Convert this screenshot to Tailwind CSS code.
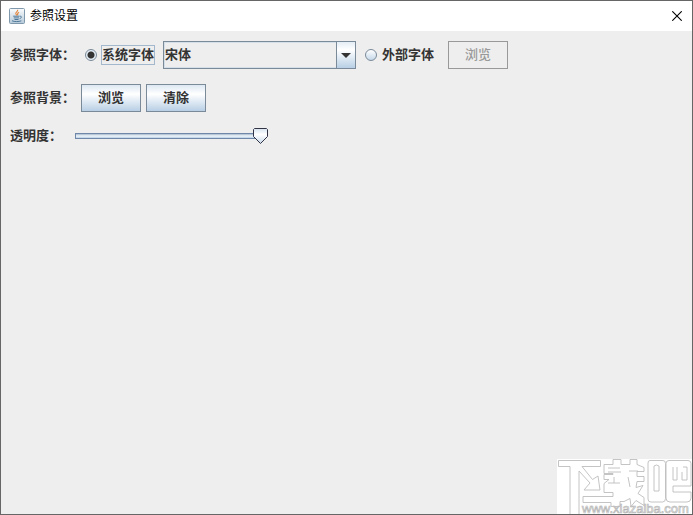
<!DOCTYPE html>
<html lang="zh-CN">
<head>
<meta charset="utf-8">
<meta name="viewport" content="width=device-width, initial-scale=1">
<title>参照设置</title>
<script src="https://cdn.jsdelivr.net/npm/@tailwindcss/browser@4"></script>
</head>
<body class="relative flex min-h-screen flex-col overflow-hidden border border-[#666] bg-[#eeeeee] font-['Liberation_Sans','Noto_Sans_CJK_SC',sans-serif] text-[13px] leading-4 font-bold text-[#333]">
  <header class="flex h-[30px] items-center bg-white px-[7px]">
    <svg class="ml-px h-4 w-4 shrink-0" viewBox="0 0 16 16" fill="none" aria-hidden="true">
      <defs>
        <linearGradient id="tile" x1="0" y1="0" x2="0" y2="1">
          <stop offset="0" stop-color="#fafcfd"/>
          <stop offset="1" stop-color="#b5c9d9"/>
        </linearGradient>
      </defs>
      <rect x=".5" y=".5" width="15" height="15" rx="1" fill="url(#tile)" stroke="#7f98ab"/>
      <path d="M8.600 1.800c.8 1.600-2.400 2.300-1.800 3.900.2.600.8 1 1 1.700M10 4.200C8.700 4.900 8 5.600 8.800 7.300" stroke="#e5863b" stroke-width="1.1"/>
      <path d="M4.200 8.200h6.300M4.800 9.900h5.200M5.500 11.500h4M3 12.800c2.400 1 6.800 1 9.300 0M10.800 8.300c2.300-.5 2 1.800-.2 2.400" stroke="#4f7898" stroke-width="1"/>
    </svg>
    <h1 class="ml-[5px] flex-1 text-xs font-normal text-black">参照设置</h1>
    <button type="button" aria-label="关闭" class="grid h-5 w-4 place-items-center">
      <svg class="h-[10px] w-[10px]" viewBox="0 0 10 10" stroke="#000" stroke-width="1.1" aria-hidden="true"><path d="M.3.3l9.400 9.400M9.700.3L.3 9.700"/></svg>
    </button>
  </header>

  <main class="flex flex-1 flex-col px-[9px] pt-[10px]">
    <div class="flex h-7 items-center" role="radiogroup" aria-label="参照字体">
      <span class="w-[75px] shrink-0">参照字体：</span>
      <input id="system" type="radio" name="source" checked class="h-3 w-3 shrink-0 appearance-none rounded-full border border-[#7a8a99] bg-linear-to-b from-white to-[#c5d7e8] checked:bg-[radial-gradient(circle,#333_0_3px,#e4edf5_4px)]">
      <label for="system" class="ml-1 flex h-5 shrink-0 items-center border border-[#a3b8cc] whitespace-nowrap">系统字体</label>
      <div class="relative ml-2 h-7 w-[193px]">
        <select aria-label="系统字体" class="h-full w-full appearance-none border border-[#7a8a99] bg-[#eeeeee] px-px shadow-[inset_0_0_0_1px_#d5dfe9]">
          <option>宋体</option>
        </select>
        <span class="pointer-events-none absolute inset-y-0 right-0 grid w-5 place-items-center border border-[#7a8a99] bg-linear-to-b from-[#e4edf5] via-white via-30% to-[#b8cfe5]">
          <svg class="h-[5px] w-[10px]" viewBox="0 0 10 5" fill="#333" aria-hidden="true"><path d="M0 0h10L5 5z"/></svg>
        </span>
      </div>
      <input id="external" type="radio" name="source" class="ml-[9px] h-3 w-3 shrink-0 appearance-none rounded-full border border-[#7a8a99] bg-linear-to-b from-white to-[#c5d7e8] checked:bg-[radial-gradient(circle,#333_0_3px,#e4edf5_4px)]">
      <label for="external" class="ml-[5px] shrink-0 whitespace-nowrap">外部字体</label>
      <button type="button" disabled class="ml-[14px] h-7 w-[60px] shrink-0 border border-[#999] font-medium text-[#999]">浏览</button>
    </div>

    <div class="mt-[15px] flex h-7 items-center gap-[5px]">
      <span class="w-[66px] shrink-0">参照背景：</span>
      <button type="button" class="h-7 w-[60px] border border-[#7a8a99] bg-linear-to-b from-[#dde8f3] via-white via-35% to-[#b8cfe5]">浏览</button>
      <button type="button" class="h-7 w-[60px] border border-[#7a8a99] bg-linear-to-b from-[#dde8f3] via-white via-35% to-[#b8cfe5]">清除</button>
    </div>

    <div class="mt-4 flex h-4 items-center">
      <label for="opacity" class="w-[65px] shrink-0">透明度：</label>
      <div class="relative flex h-4 w-[193px] items-center">
        <input id="opacity" type="range" min="0" max="100" value="100" class="mr-[7px] h-[6px] w-full appearance-none border border-[#6f87a8] bg-linear-to-b from-[#a3b8cc] via-[#f2f7fb] to-[#b8cfe5] [&::-webkit-slider-thumb]:h-4 [&::-webkit-slider-thumb]:w-[15px] [&::-webkit-slider-thumb]:appearance-none [&::-webkit-slider-thumb]:opacity-0">
        <svg class="pointer-events-none absolute top-0 right-0 h-4 w-[15px]" viewBox="0 0 15 16" aria-hidden="true">
          <defs>
            <linearGradient id="knob" x1="0" y1="0" x2="0" y2="1">
              <stop offset="0" stop-color="#d5e2ef"/>
              <stop offset=".4" stop-color="#fff"/>
              <stop offset="1" stop-color="#c8d9ea"/>
            </linearGradient>
          </defs>
          <path d="M1.500.5h12l1 1v7l-7 7-7-7v-7z" fill="url(#knob)" stroke="#333346"/>
        </svg>
      </div>
    </div>
  </main>

  <div class="pointer-events-none absolute -right-px -bottom-px h-14 w-[136px] overflow-hidden bg-white">
    <svg class="h-full w-full" viewBox="0 0 136 56" role="img" aria-label="下载吧 www.xiazaiba.com">
      <g fill="#fff" stroke="#bdbdbd" stroke-width=".9" stroke-linejoin="round">
        <path d="M1.500 1.500h42v6H25l10.500 13L41 17l2 14H27l6-7L22 12v46h-9V7.500H1.500z"/>
        <path d="M47 5.500h9v-5h8v5h9v-5h7v5l7 3v4h-7v5h7v5h-7l-1 6 7-2-5 8 6 4v8l-8-5-5 6-1-8-6 3h-4v5h-9v-4H26v-6h30v-4h-9v-9l5-4h-5v-5h9v-1h-9z"/>
        <path d="M51 9h12M51 13h13M51 24h12M72 12h9M71 18l2 10M57 18v6" fill="none"/>
        <path d="M93 1.500h13q2.500 0 2.500 3v35q0 3.500-3 3.500H94q-3 0-3-3V4q0-2.500 2-2.500zM97 7q2.500-2 5 0v25h-5z" fill-rule="evenodd"/>
        <path d="M112 1.500h19q3 0 3 3V27h-18v6h18v6q0 4-4 4h-17q-4 0-4-4V4.500q0-3 3-3z"/>
        <path d="M116 8v13h4V8M126 8h4v13h-5v-8" fill="none"/>
      </g>
      <text x="25" y="54" fill="#fff" stroke="#b5b5b5" stroke-width=".7" font-family="Liberation Sans, sans-serif" font-size="13" font-weight="400">www.xiazaiba.com</text>
    </svg>
  </div>
</body>
</html>
